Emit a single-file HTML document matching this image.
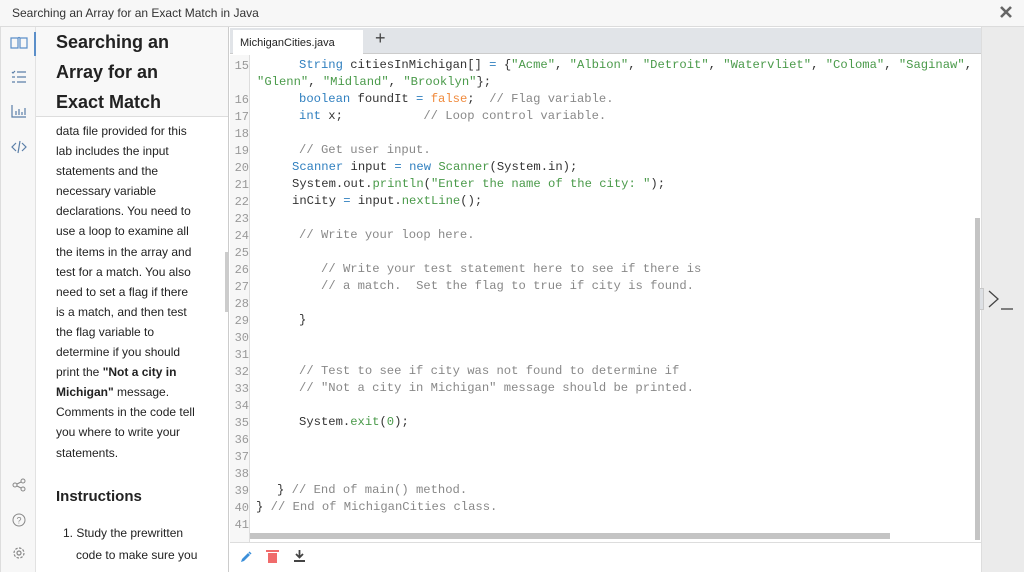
<!DOCTYPE html>
<html><head><meta charset="utf-8"><style>
*{margin:0;padding:0;box-sizing:border-box}
body{width:1024px;height:572px;overflow:hidden;background:#fff;font-family:"Liberation Sans",sans-serif;position:relative}
.abs{position:absolute}
#title{left:0;top:0;width:1024px;height:27px;background:#f7f7f7;border-bottom:1px solid #dcdcdc;font-size:12px;color:#333;padding:6px 0 0 12px}
#rail{left:0;top:27px;width:36px;height:545px;background:#f7f7f7;border-right:1px solid #e2e2e2;border-left:1px solid #ddd}
#text{left:36px;top:27px;width:193px;height:545px;background:#fff;border-right:1px solid #ccc;overflow:hidden}
#hd{position:absolute;left:0;top:0;width:193px;height:90px;background:#f8f8f8;border-bottom:1px solid #ddd;padding-left:20px;font-size:18px;font-weight:bold;line-height:30px;color:#222}
#body{position:absolute;left:20px;top:94px;width:175px;font-size:12px;line-height:20.1px;color:#222;white-space:nowrap}
#tabbar{left:230px;top:28px;width:751px;height:26px;background:#e1e4e8;border-bottom:1px solid #ccc}
#tab{left:233px;top:30px;width:130px;height:24px;background:#fff;font-size:11px;padding:7px 0 0 7px;color:#222}
#plus{left:375px;top:28px;font-size:18px;color:#444}
#gut{left:230px;top:55px;width:20px;height:487px;background:#f7f7f7;border-right:1px solid #ddd}
.ln{position:absolute;left:0;width:19px;text-align:right;font-family:"Liberation Mono",monospace;font-size:12px;color:#999}
.cd{position:absolute;font-family:"Liberation Mono",monospace;font-size:12.2px;color:#333;white-space:pre}
.k{color:#2f7fbf}.s{color:#4a9a4a}.c{color:#888}.o{color:#f08a3c}
#right{left:981px;top:27px;width:43px;height:545px;background:#ebebeb;border-left:1px solid #ddd}
</style></head><body>
<div id="title" class="abs">Searching an Array for an Exact Match in Java</div>
<svg class="abs" style="left:999px;top:5px" width="14" height="14" viewBox="0 0 14 14"><path d="M2 2L12 12M12 2L2 12" stroke="#666" stroke-width="2.6"/></svg>
<div id="rail" class="abs">
<svg style="position:absolute;left:9px;top:9px" width="18" height="14" viewBox="0 0 18 14" fill="none" stroke="#5b8fc9" stroke-width="1.2"><path d="M1 2h7v10H1zM10 2h7v10h-7zM8 2q1 -1 2 0"/></svg>
<div style="position:absolute;left:33px;top:5px;width:2px;height:24px;background:#5b8fc9"></div>
<svg style="position:absolute;left:10px;top:43px" width="16" height="14" viewBox="0 0 16 14" fill="none" stroke="#5b7fa8" stroke-width="1.2"><path d="M1 2l1 1 2-2M6 2h9M1 7h3M6 7h9M1 12h3M6 12h9"/></svg>
<svg style="position:absolute;left:10px;top:77px" width="16" height="14" viewBox="0 0 16 14" fill="none" stroke="#5b7fa8" stroke-width="1.2"><path d="M1 1v12h14M5 11V7M8 11V5M11 11V8M14 11V4"/></svg>
<svg style="position:absolute;left:10px;top:113px" width="16" height="14" viewBox="0 0 16 14" fill="none" stroke="#5b7fa8" stroke-width="1.2"><path d="M5 3L1 7l4 4M11 3l4 4-4 4M9 1L7 13"/></svg>
<svg style="position:absolute;left:11px;top:451px" width="14" height="14" viewBox="0 0 14 14" fill="none" stroke="#888" stroke-width="1"><circle cx="3" cy="7" r="2"/><circle cx="11" cy="3" r="2"/><circle cx="11" cy="11" r="2"/><path d="M5 6l4-2M5 8l4 2"/></svg>
<svg style="position:absolute;left:11px;top:486px" width="14" height="14" viewBox="0 0 14 14" fill="none" stroke="#888" stroke-width="1"><circle cx="7" cy="7" r="6"/><text x="7" y="10.5" font-size="9" text-anchor="middle" fill="#888" stroke="none" font-family="Liberation Sans">?</text></svg>
<svg style="position:absolute;left:11px;top:519px" width="14" height="14" viewBox="0 0 14 14" fill="none" stroke="#888" stroke-width="1.2"><circle cx="7" cy="7" r="2"/><circle cx="7" cy="7" r="5" stroke-dasharray="2.5 1.4"/></svg>
</div>
<div id="text" class="abs">
<div id="hd">Searching an<br>Array for an<br>Exact Match</div>
<div id="body">data file provided for this<br>lab includes the input<br>statements and the<br>necessary variable<br>declarations. You need to<br>use a loop to examine all<br>the items in the array and<br>test for a match. You also<br>need to set a flag if there<br>is a match, and then test<br>the flag variable to<br>determine if you should<br>print the <b>"Not a city in</b><br><b>Michigan"</b> message.<br>Comments in the code tell<br>you where to write your<br>statements.
<div style="font-size:15px;font-weight:bold;margin-top:24px">Instructions</div>
<div style="margin:15px 0 0 0;padding-left:20px;text-indent:-13px;line-height:22px">1. Study the prewritten<br>code to make sure you</div>
</div>
<div style="position:absolute;left:189px;top:225px;width:3px;height:60px;background:#ccc"></div>
</div>
<div id="tabbar" class="abs"></div>
<div id="tab" class="abs">MichiganCities.java</div>
<div id="plus" class="abs">+</div>
<div id="gut" class="abs">
<div class="ln" style="top:4px">15</div>
<div class="ln" style="top:38px">16</div><div class="ln" style="top:55px">17</div><div class="ln" style="top:72px">18</div><div class="ln" style="top:89px">19</div><div class="ln" style="top:106px">20</div><div class="ln" style="top:123px">21</div><div class="ln" style="top:140px">22</div><div class="ln" style="top:157px">23</div><div class="ln" style="top:174px">24</div><div class="ln" style="top:191px">25</div><div class="ln" style="top:208px">26</div><div class="ln" style="top:225px">27</div><div class="ln" style="top:242px">28</div><div class="ln" style="top:259px">29</div><div class="ln" style="top:276px">30</div><div class="ln" style="top:293px">31</div><div class="ln" style="top:310px">32</div><div class="ln" style="top:327px">33</div><div class="ln" style="top:344px">34</div><div class="ln" style="top:361px">35</div><div class="ln" style="top:378px">36</div><div class="ln" style="top:395px">37</div><div class="ln" style="top:412px">38</div><div class="ln" style="top:429px">39</div><div class="ln" style="top:446px">40</div><div class="ln" style="top:463px">41</div>
</div>
<div class="cd" style="left:299px;top:58px"><span class="k">String</span> citiesInMichigan[] <span class="k">=</span> {<span class="s">"Acme"</span>, <span class="s">"Albion"</span>, <span class="s">"Detroit"</span>, <span class="s">"Watervliet"</span>, <span class="s">"Coloma"</span>, <span class="s">"Saginaw"</span>,</div>
<div class="cd" style="left:257px;top:75px"><span class="s">"Glenn"</span>, <span class="s">"Midland"</span>, <span class="s">"Brooklyn"</span>};</div>
<div class="cd" style="left:299px;top:92px"><span class="k">boolean</span> foundIt <span class="k">=</span> <span class="o">false</span>;  <span class="c">// Flag variable.</span></div>
<div class="cd" style="left:299px;top:109px"><span class="k">int</span> x;           <span class="c">// Loop control variable.</span></div>
<div class="cd c" style="left:299px;top:143px">// Get user input.</div>
<div class="cd" style="left:292px;top:160px"><span class="k">Scanner</span> input <span class="k">=</span> <span class="k">new</span> <span class="s">Scanner</span>(System.in);</div>
<div class="cd" style="left:292px;top:177px">System.out.<span class="s">println</span>(<span class="s">"Enter the name of the city: "</span>);</div>
<div class="cd" style="left:292px;top:194px">inCity <span class="k">=</span> input.<span class="s">nextLine</span>();</div>
<div class="cd c" style="left:299px;top:228px">// Write your loop here.</div>
<div class="cd c" style="left:321px;top:262px">// Write your test statement here to see if there is</div>
<div class="cd c" style="left:321px;top:279px">// a match.  Set the flag to true if city is found.</div>
<div class="cd" style="left:299px;top:313px">}</div>
<div class="cd c" style="left:299px;top:364px">// Test to see if city was not found to determine if</div>
<div class="cd c" style="left:299px;top:381px">// "Not a city in Michigan" message should be printed.</div>
<div class="cd" style="left:299px;top:415px">System.<span class="s">exit</span>(<span class="s">0</span>);</div>
<div class="cd" style="left:277px;top:483px">} <span class="c">// End of main() method.</span></div>
<div class="cd" style="left:256px;top:500px">} <span class="c">// End of MichiganCities class.</span></div>
<div class="abs" style="left:250px;top:533px;width:640px;height:6px;background:#c4c4c4"></div>
<div class="abs" style="left:975px;top:218px;width:5px;height:322px;background:#c4c4c4"></div>
<div class="abs" style="left:230px;top:542px;width:751px;height:1px;background:#ddd"></div>
<svg class="abs" style="left:240px;top:551px" width="12" height="12" viewBox="0 0 12 12"><path d="M1 11l1-3 6-6 2 2-6 6z" fill="#3b8fd9"/><path d="M9 1l2 2" stroke="#3b8fd9" stroke-width="1.5"/></svg>
<div class="abs" style="left:268px;top:553px;width:9px;height:10px;background:#f06b6b"></div>
<div class="abs" style="left:266px;top:550px;width:13px;height:2px;background:#f06b6b"></div>
<svg class="abs" style="left:294px;top:550px" width="11" height="12" viewBox="0 0 11 12"><path d="M5.5 0v7M2 4l3.5 3.5L9 4" stroke="#444" stroke-width="1.8" fill="none"/><path d="M0 10h11v2H0z" fill="#444"/></svg>
<div id="right" class="abs"></div>
<div class="abs" style="left:979px;top:288px;width:5px;height:22px;background:#dde0e4;border:1px solid #c8c8c8"></div>
<svg class="abs" style="left:988px;top:290px" width="28" height="20" viewBox="0 0 28 20"><path d="M1 1l9 8-9 8" stroke="#444" stroke-width="1.3" fill="none"/><path d="M13 19h12" stroke="#444" stroke-width="1.3"/></svg>
</body></html>
